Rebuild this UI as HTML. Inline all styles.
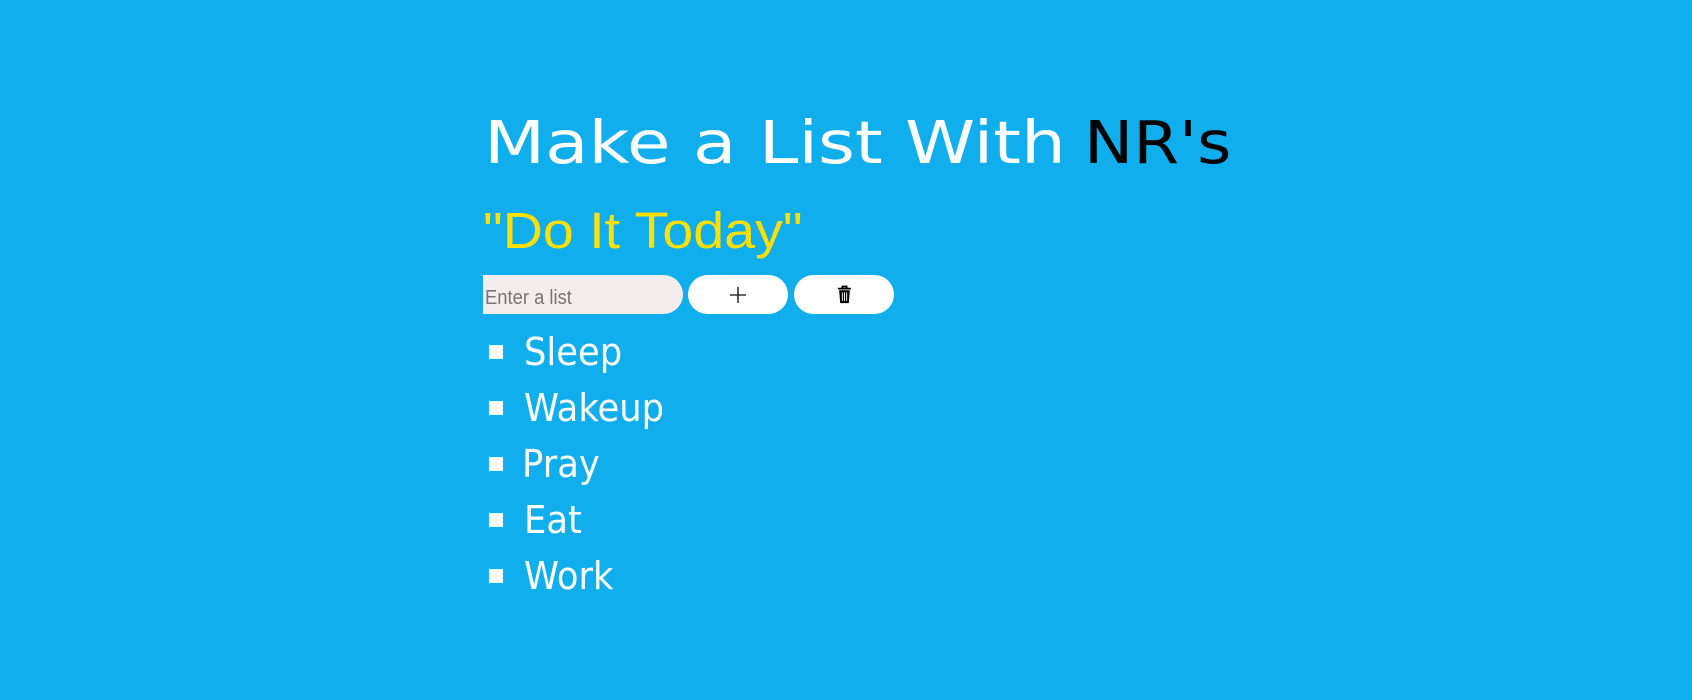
<!DOCTYPE html>
<html><head><meta charset="utf-8">
<style>
html,body{margin:0;padding:0;width:1692px;height:700px;background:#10aeec;overflow:hidden;position:relative}
.t{position:absolute;white-space:nowrap;transform-origin:0 0}
#title{left:484px;top:101px;font-family:"DejaVu Sans",sans-serif;font-size:59px;color:#fff;line-height:84px}
#sub{left:483px;top:198px;font-family:"Liberation Sans",sans-serif;font-size:51px;color:#ffe000;line-height:66px}
#inp{position:absolute;left:483px;top:275px;width:200px;height:39px;background:#f5eded;border-radius:0 20px 20px 0;box-sizing:border-box;padding-left:2px;padding-top:4px;font-family:"Liberation Sans",sans-serif;font-size:20px;color:#7a7474;line-height:39px;overflow:hidden}
.btn{position:absolute;top:275px;width:100px;height:39px;background:#fff;border-radius:20px;display:flex;align-items:center;justify-content:center}
.li{position:absolute;left:489px;width:14px;height:14px;background:#fff}
.lt{position:absolute;left:524px;font-family:"DejaVu Sans",sans-serif;font-size:38px;color:#fff;line-height:44px;white-space:nowrap;transform:scaleX(0.93);transform-origin:0 0}
</style></head><body>
<div class="t" id="title"><span style="display:inline-block;transform:scaleX(1.2);transform-origin:0 0">Make a List With<span style="color:#000;display:inline-block;margin-left:15px;transform:scaleX(0.93);transform-origin:0 0">NR's</span></span></div>
<div class="t" id="sub"><span style="display:inline-block;transform:scaleX(1.09);transform-origin:0 0">"Do It Today"</span></div>
<div id="inp"><span style="display:inline-block;transform:scaleX(0.92);transform-origin:0 0;line-height:30px">Enter a list</span></div>
<div class="btn" style="left:688px"><svg width="18" height="18" viewBox="0 0 18 18"><path d="M9 1v16M1 9h16" stroke="#333" stroke-width="1.6"/></svg></div>
<div class="btn" style="left:794px"><svg width="15" height="19" viewBox="0 0 14 17"><path d="M1 3h12M5 3V1h4v2" stroke="#000" stroke-width="1.6" fill="none"/><path d="M2 4.5h10l-1 12H3z" fill="#000"/><path d="M5 6.5v8M7 6.5v8M9 6.5v8" stroke="#fff" stroke-width="0.9"/></svg></div>
<div class="li" style="top:345px"></div><div class="lt" style="top:330px">Sleep</div>
<div class="li" style="top:401px"></div><div class="lt" style="top:386px">Wakeup</div>
<div class="li" style="top:457px"></div><div class="lt" style="top:442px;left:522px">Pray</div>
<div class="li" style="top:513px"></div><div class="lt" style="top:498px">Eat</div>
<div class="li" style="top:569px"></div><div class="lt" style="top:554px">Work</div>
</body></html>
